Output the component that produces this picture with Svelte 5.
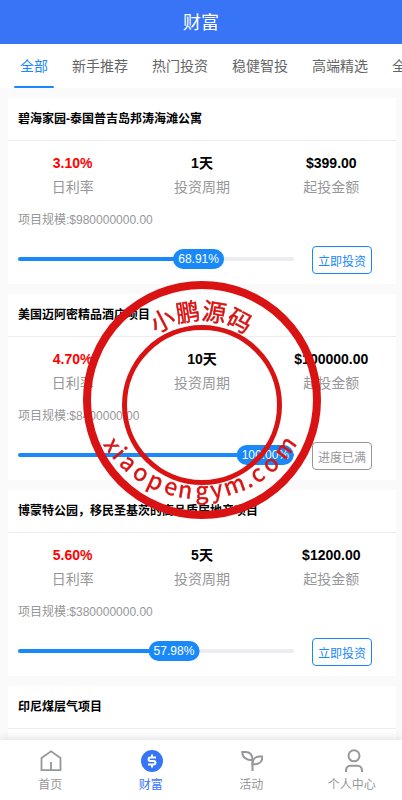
<script lang="ts">
  const tabs = ['全部', '新手推荐', '热门投资', '稳健智投', '高端精选', '全'];
  let activeTab = $state(0);

  const projects = [
    { title: '碧海家园-泰国普吉岛邦涛海滩公寓', rate: '3.10%', days: '1天', min: '$399.00', scale: '$980000000.00', progress: '68.91' },
    { title: '美国迈阿密精品酒店项目', rate: '4.70%', days: '10天', min: '$100000.00', scale: '$8400000.00', progress: '100.00' },
    { title: '博蒙特公园，移民圣基茨的高品质房地产项目', rate: '5.60%', days: '5天', min: '$1200.00', scale: '$380000000.00', progress: '57.98' },
    { title: '印尼煤层气项目' },
  ];

  const nav = [
    { id: 'home', label: '首页' },
    { id: 'wealth', label: '财富' },
    { id: 'activity', label: '活动' },
    { id: 'mine', label: '个人中心' },
  ];
  let activeNav = $state('wealth');

  // Lower seal lettering: angle from the bottom and advance (em) of each letter
  const domain = 'xiaopengym.com';
  const angles = [56, 50, 43, 34, 25, 16, 8, -1, -9, -19, -27, -33, -42, -54];
  const advances = [0.5, 0.28, 0.56, 0.6, 0.62, 0.55, 0.61, 0.56, 0.52, 0.93, 0.28, 0.51, 0.6, 0.93];
  const letterSize = 23;
  const letters = angles.map((deg, i) => {
    const a = (deg * Math.PI) / 180;
    const half = (advances[i] * letterSize) / 2;
    return {
      x: 120 - 113 * Math.sin(a) - half * Math.cos(a),
      y: 107 + 113 * Math.cos(a) - half * Math.sin(a),
      deg,
    };
  });
</script>

<div class="page">
  <header class="nav-bar">
    <h1>财富</h1>
  </header>

  <div class="tabs" role="tablist">
    {#each tabs as tab, index}
      <button
        class="tab"
        class:active={activeTab === index}
        role="tab"
        aria-selected={activeTab === index}
        onclick={() => (activeTab = index)}
      >
        {tab}
      </button>
    {/each}
  </div>

  <main class="list">
    {#each projects as item}
      <article class="card">
        <h2 class="card-title">{item.title}</h2>
        <div class="card-body">
          {#if item.progress}
            <dl class="stats">
              <div class="stat">
                <dd class="rate">{item.rate}</dd>
                <dt>日利率</dt>
              </div>
              <div class="stat">
                <dd>{item.days}</dd>
                <dt>投资周期</dt>
              </div>
              <div class="stat">
                <dd>{item.min}</dd>
                <dt>起投金额</dt>
              </div>
            </dl>
            <p class="scale">项目规模:{item.scale}</p>
            <div class="action">
              <div class="progress">
                <div class="portion" style="width: {item.progress}%"></div>
                <span
                  class="pivot"
                  style="left: {item.progress}%; transform: translate(-{item.progress}%, -50%)"
                >{item.progress}%</span>
              </div>
              {#if Number(item.progress) < 100}
                <button class="invest">立即投资</button>
              {:else}
                <button class="invest full" disabled>进度已满</button>
              {/if}
            </div>
          {/if}
        </div>
      </article>
    {/each}
  </main>

  <nav class="tabbar">
    {#each nav as item}
      <button
        class="tabbar-item"
        class:active={activeNav === item.id}
        onclick={() => (activeNav = item.id)}
      >
        <svg viewBox="0 0 24 24" width="24" height="24" fill="none" stroke="currentColor" stroke-width="2" aria-hidden="true">
          {#if item.id === 'home'}
            <path d="M3.500 9 13 2.300 22.500 9v12.200h-19z" stroke-width="1.8" />
            <path d="M13 13v8" stroke-width="1.8" />
          {:else if item.id === 'wealth'}
            <circle cx="13" cy="12" r="11" fill="currentColor" stroke="none" />
            <path d="M17 8.600h-5.700a1.700 1.700 0 0 0 0 3.400h3.400a1.700 1.700 0 0 1 0 3.400H9M13 5.500v3M13 15.500v3" stroke="#fff" />
          {:else if item.id === 'activity'}
            <path d="M3.300 3h3.200c4.500 0 7 3 7 8.300C7.500 11.300 3.300 8.500 3.300 3z" />
            <path d="M13.500 15.300c0-5 3-7.800 7-7.800h3c0 5-3.400 7.800-8 7.800z" />
            <path d="M13.500 10.500v11.500" />
          {:else}
            <circle cx="14" cy="6.800" r="5.500" />
            <path d="M6 23v-1.500c0-3 2-4.800 4.500-4.800h7c2.500 0 4.500 1.800 4.500 4.800V23" />
          {/if}
        </svg>
        <span>{item.label}</span>
      </button>
    {/each}
  </nav>

  <svg class="seal" viewBox="0 0 242 242" width="242" height="242">
    <defs>
      <path id="seal-arc" d="M46 116a75 75 0 0 1 150 0" />
    </defs>
    <circle cx="122" cy="121" r="115" stroke-width="8" />
    <circle cx="122" cy="126" r="77.500" stroke-width="5" />
    <text class="seal-name">
      <textPath href="#seal-arc" startOffset="50%" text-anchor="middle">小鹏源码</textPath>
    </text>
    <text
      class="seal-domain"
      font-size={letterSize}
      x={letters.map((l) => l.x).join(' ')}
      y={letters.map((l) => l.y).join(' ')}
      rotate={letters.map((l) => l.deg).join(' ')}
    >{domain}</text>
  </svg>
</div>

<style>
  :global(body) {
    margin: 0;
    background: #fafafa;
    font-family: 'Liberation Sans', 'Noto Sans CJK SC', sans-serif;
  }

  button {
    padding: 0;
    border: none;
    background: none;
    font-family: inherit;
    cursor: pointer;
  }

  .page {
    display: flex;
    flex-direction: column;
    height: 100vh;
  }

  .nav-bar {
    flex: none;
    padding-top: 2px;
    background: #3875f6;
    color: #fff;
    text-align: center;
  }

  .nav-bar h1 {
    margin: 0;
    font-size: 18px;
    font-weight: 400;
    line-height: 42px;
  }

  .tabs {
    display: flex;
    flex: none;
    padding: 0 8px;
    background: #fff;
    overflow: hidden;
  }

  .tab {
    position: relative;
    flex: none;
    padding: 0 12px;
    color: #646566;
    font-size: 14px;
    line-height: 44px;
  }

  .tab.active {
    color: #1989fa;
  }

  .tab.active::after {
    content: '';
    position: absolute;
    right: 6px;
    bottom: 0;
    left: 6px;
    height: 2px;
    border-radius: 2px;
    background: #1989fa;
  }

  .list {
    display: flex;
    flex: 1;
    flex-direction: column;
    gap: 10px;
    min-height: 0;
    padding: 10px 6px 0 8px;
    overflow-y: auto;
    scrollbar-width: none;
  }

  .card {
    flex: none;
    background: #fff;
  }

  .card-title {
    margin: 0;
    padding: 0 10px;
    border-bottom: 1px solid #ebedf0;
    color: #000;
    font-size: 12px;
    font-weight: 700;
    line-height: 42px;
  }

  .card-body {
    min-height: 123px;
    padding: 10px 0;
    box-sizing: border-box;
  }

  .stats {
    display: grid;
    grid-template-columns: repeat(3, 1fr);
    margin: 0;
    font-size: 14px;
    line-height: 24px;
    text-align: center;
  }

  .stat dd {
    margin: 0;
    color: #000;
    font-weight: 700;
  }

  .stat dd.rate {
    color: #f00;
  }

  .stat dt {
    color: #969799;
  }

  .scale {
    margin: 11px 10px 16px;
    color: #969799;
    font-size: 12px;
    line-height: 20px;
  }

  .action {
    display: flex;
    align-items: flex-start;
    gap: 18px;
    padding: 0 24px 0 10px;
  }

  .progress {
    position: relative;
    flex: 1;
    height: 4px;
    margin-top: 11px;
    border-radius: 4px;
    background: #ebedf0;
  }

  .portion {
    height: 100%;
    border-radius: 4px;
    background: #1989fa;
  }

  .pivot {
    position: absolute;
    top: 50%;
    padding: 0 5px;
    border-radius: 10px;
    background: #1989fa;
    color: #fff;
    font-size: 12px;
    line-height: 20px;
  }

  .invest {
    width: 60px;
    height: 28px;
    border: 1px solid #1989fa;
    border-radius: 4px;
    background: #fff;
    color: #1989fa;
    font-size: 12px;
  }

  .invest.full {
    border-color: #969799;
    color: #969799;
  }

  .tabbar {
    position: relative;
    display: flex;
    flex: none;
    height: 60px;
    background: #fff;
    box-shadow: 0 0 10px rgba(0, 0, 0, 0.16);
  }

  .tabbar-item {
    display: flex;
    flex: 1;
    flex-direction: column;
    align-items: center;
    padding-top: 9px;
    gap: 4px;
    color: #969799;
    font-size: 12px;
    line-height: 16px;
  }

  .tabbar-item.active {
    color: #3875f6;
  }

  .seal {
    position: fixed;
    top: 50%;
    left: 50%;
    transform: translate(-50%, -50%);
    pointer-events: none;
  }

  .seal circle {
    fill: none;
    stroke: #d91313;
  }

  .seal text {
    fill: #d91313;
    stroke: #d91313;
    stroke-width: 0.5;
    font-family: 'Noto Sans CJK SC', sans-serif;
  }

  .seal-name {
    font-size: 24px;
  }
</style>
